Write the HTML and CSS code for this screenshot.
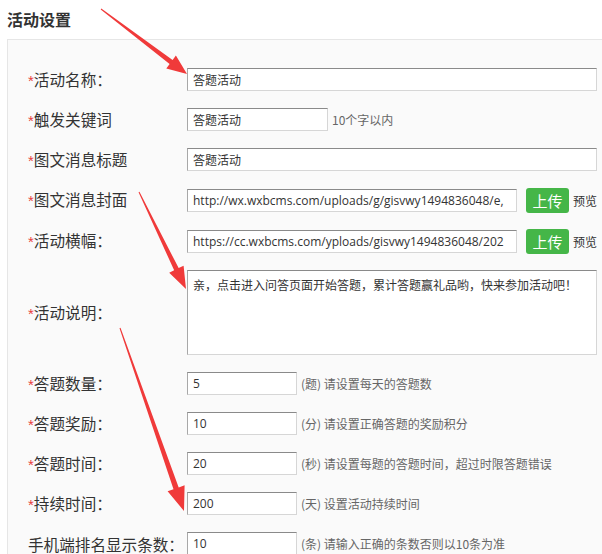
FILE: index.html
```html
<!DOCTYPE html>
<html lang="zh-CN">
<head>
<meta charset="utf-8">
<title>活动设置</title>
<link rel="stylesheet" href="styles.css">
</head>
<body>
<div class="page">
  <h2 class="title">活动设置</h2>
  <div class="panel">
    <div class="row">
      <label class="lbl"><span class="req">*</span>活动名称：</label>
      <div class="field"><input class="in w-full" value="答题活动"></div>
    </div>
    <div class="row">
      <label class="lbl"><span class="req">*</span>触发关键词</label>
      <div class="field"><input class="in w-key" value="答题活动"><span class="hint">10个字以内</span></div>
    </div>
    <div class="row">
      <label class="lbl"><span class="req">*</span>图文消息标题</label>
      <div class="field"><input class="in w-full" value="答题活动"></div>
    </div>
    <div class="row row-btn">
      <label class="lbl"><span class="req">*</span>图文消息封面</label>
      <div class="field"><input class="in w-url" value="http://wx.wxbcms.com/uploads/g/gisvwy1494836048/e,"><button class="btn">上传</button><span class="preview">预览</span></div>
    </div>
    <div class="row row-btn">
      <label class="lbl"><span class="req">*</span>活动横幅：</label>
      <div class="field"><input class="in w-url" value="https://cc.wxbcms.com/yploads/gisvwy1494836048/202"><button class="btn">上传</button><span class="preview">预览</span></div>
    </div>
    <div class="row row-area">
      <label class="lbl"><span class="req">*</span>活动说明：</label>
      <div class="field"><textarea class="area">亲，点击进入问答页面开始答题，累计答题赢礼品哟，快来参加活动吧！</textarea></div>
    </div>
    <div class="row">
      <label class="lbl"><span class="req">*</span>答题数量：</label>
      <div class="field"><input class="in w-num" value="5"><span class="hint">(题) 请设置每天的答题数</span></div>
    </div>
    <div class="row">
      <label class="lbl"><span class="req">*</span>答题奖励：</label>
      <div class="field"><input class="in w-num" value="10"><span class="hint">(分) 请设置正确答题的奖励积分</span></div>
    </div>
    <div class="row">
      <label class="lbl"><span class="req">*</span>答题时间：</label>
      <div class="field"><input class="in w-num" value="20"><span class="hint">(秒) 请设置每题的答题时间，超过时限答题错误</span></div>
    </div>
    <div class="row">
      <label class="lbl"><span class="req">*</span>持续时间：</label>
      <div class="field"><input class="in w-num" value="200"><span class="hint">(天) 设置活动持续时间</span></div>
    </div>
    <div class="row">
      <label class="lbl">手机端排名显示条数：</label>
      <div class="field"><input class="in w-num" value="10"><span class="hint">(条) 请输入正确的条数否则以10条为准</span></div>
    </div>
  </div>
  <svg class="arrows" width="602" height="554" viewBox="0 0 602 554" xmlns="http://www.w3.org/2000/svg">
    <polygon points="100.7,9.4 169.6,64.0 166.3,68.4 187,74 175.9,55.6 172.6,60.0 101.3,8.6"/>
    <polygon points="138.55,192.2 174.15,270.3 169.2,272.7 186,289 183.6,265.7 178.65,268.1 139.45,191.8"/>
    <polygon points="119.5,328.2 173.5,489.2 167.6,491.3 184,511 184.6,485.3 178.7,487.4 120.5,327.8"/>
  </svg>
</div>
</body>
</html>
```

FILE: styles.css
```css
html, body {
  margin: 0;
  padding: 0;
  background: #ffffff;
}

.page {
  position: relative;
  width: 602px;
  height: 554px;
  overflow: hidden;
  font-family: "Noto Sans CJK SC", "Noto Sans", sans-serif;
  color: #333;
}

.title {
  margin: 0;
  padding: 8px 0 0 7px;
  height: 39px;
  box-sizing: border-box;
  font-size: 16px;
  font-weight: 700;
  line-height: 22px;
  color: #333;
}

.panel {
  margin-left: 7px;
  width: 640px;
  height: 600px;
  background: #fafafa;
  border-top: 1px solid #e6e6e6;
  border-left: 1px solid #e6e6e6;
  box-sizing: border-box;
  padding: 28px 0 0 20px;
  display: flex;
  flex-direction: column;
  gap: 17px;
}

.row {
  display: flex;
  align-items: center;
  height: 23px;
}

.row-btn {
  height: 24px;
}

.row-area {
  height: 85px;
}

.lbl {
  width: 159px;
  flex: none;
  font-family: "Noto Sans CJK TC", "Noto Sans CJK SC", sans-serif;
  font-size: 15.6px;
  line-height: 20px;
  color: #333;
  white-space: nowrap;
}

.req {
  color: #e8403c;
  font-family: "Liberation Sans", sans-serif;
  font-size: 15px;
}

.field {
  display: flex;
  align-items: center;
  height: 100%;
}

.in {
  box-sizing: border-box;
  height: 23px;
  margin: 0;
  padding: 0 5px;
  font-family: "Open Sans", "Noto Sans CJK SC", sans-serif;
  font-size: 12px;
  color: #333;
  background: #fff;
  border: 1px solid #d6d6d6;
  border-top-color: #8a8a8a;
  border-left-color: #a8a8a8;
  outline: none;
}

.w-full { width: 410px; }
.w-key { width: 141px; }
.w-url { width: 330px; }
.w-num { width: 110px; }

.area {
  box-sizing: border-box;
  width: 410px;
  height: 85px;
  margin: 0;
  padding: 5px 5px;
  resize: none;
  font-family: "Noto Sans CJK SC", sans-serif;
  font-size: 12px;
  line-height: 18px;
  color: #333;
  background: #fff;
  border: 1px solid #d6d6d6;
  border-top-color: #8a8a8a;
  border-left-color: #a8a8a8;
  outline: none;
}

.hint {
  margin-left: 4px;
  font-size: 12px;
  color: #666;
  white-space: nowrap;
}

.btn {
  margin-left: 9px;
  width: 43px;
  height: 25px;
  padding: 0;
  border: none;
  border-radius: 3px;
  background: #45b648;
  color: #fff;
  font-family: "Noto Sans CJK SC", sans-serif;
  font-size: 15px;
  line-height: 25px;
}

.preview {
  margin-left: 4px;
  font-size: 12px;
  color: #333;
  white-space: nowrap;
}

.arrows {
  position: absolute;
  left: 0;
  top: 0;
  pointer-events: none;
}

.arrows polygon {
  fill: #f03a3a;
}
```
